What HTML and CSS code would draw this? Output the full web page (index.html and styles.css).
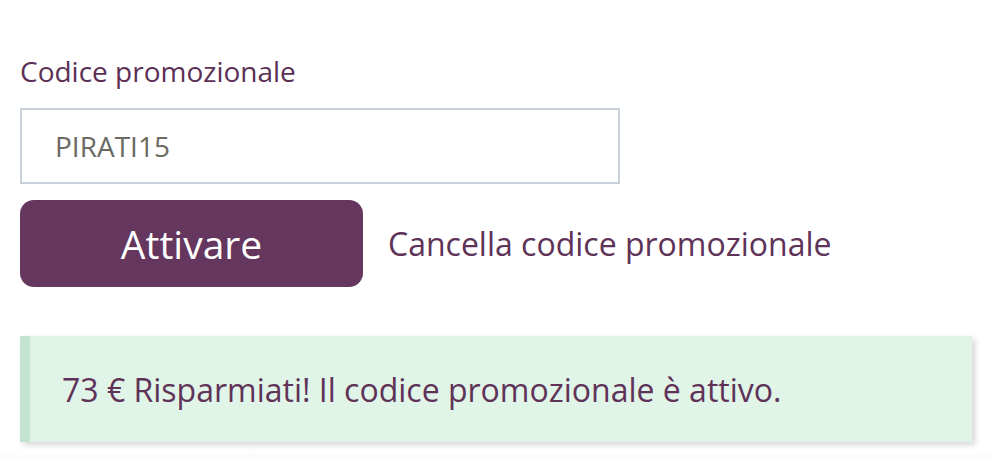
FILE: index.html
```html
<!DOCTYPE html>
<html lang="it">

<head>
    <meta charset="UTF-8">
    <meta name="viewport" content="width=device-width, initial-scale=1.0">
    <title>Codice promozionale</title>
    <link rel="stylesheet" href="styles.css">
</head>

<body>
    <div class="promo">
        <label for="promoCode" class="promoLabel">Codice promozionale</label>
        <input type="text" id="promoCode" class="promoInput" value="PIRATI15">
        <div class="promoActions">
            <button class="btnActivate">Attivare</button>
            <a href="#" class="promoCancel">Cancella codice promozionale</a>
        </div>
        <div class="promoSuccess">73 € Risparmiati! Il codice promozionale è attivo.</div>
    </div>
    <div class="pageBottom"></div>
</body>

</html>
```

FILE: styles.css
```css
body {
    margin: 0;
    font-family: "Open Sans", "Noto Sans", sans-serif;
    background-color: white;
}

.promo {
    padding: 52px 20px 0 20px;
}

.promoLabel {
    display: block;
    font-size: 28px;
    line-height: 38px;
    color: #5c3055;
}

.promoInput {
    display: block;
    box-sizing: border-box;
    width: 600px;
    height: 76px;
    margin-top: 18px;
    padding: 0 0 0 33px;
    border: 2px solid #c8d0da;
    border-radius: 0;
    font-family: inherit;
    font-size: 28px;
    color: #6b6a63;
    outline: none;
}

.promoActions {
    display: flex;
    align-items: center;
    gap: 25px;
    margin-top: 16px;
}

.btnActivate {
    width: 343px;
    height: 87px;
    border: none;
    border-radius: 14px;
    background-color: #65375e;
    color: white;
    font-family: inherit;
    font-size: 39px;
    padding: 0;
}

.promoCancel {
    font-size: 32px;
    color: #5e3357;
    text-decoration: none;
}

.promoSuccess {
    box-sizing: border-box;
    width: 952px;
    height: 106px;
    margin-top: 49px;
    padding-left: 32px;
    display: flex;
    align-items: center;
    border-left: 10px solid #c3e4cf;
    background-color: #e1f4e8;
    box-shadow: 3px 3px 6px rgba(0, 0, 0, 0.16);
    font-size: 32px;
    color: #5e3357;
}

.pageBottom {
    margin-top: 8px;
    height: 20px;
    background: linear-gradient(#ffffff, #f6f6f6);
}
```
